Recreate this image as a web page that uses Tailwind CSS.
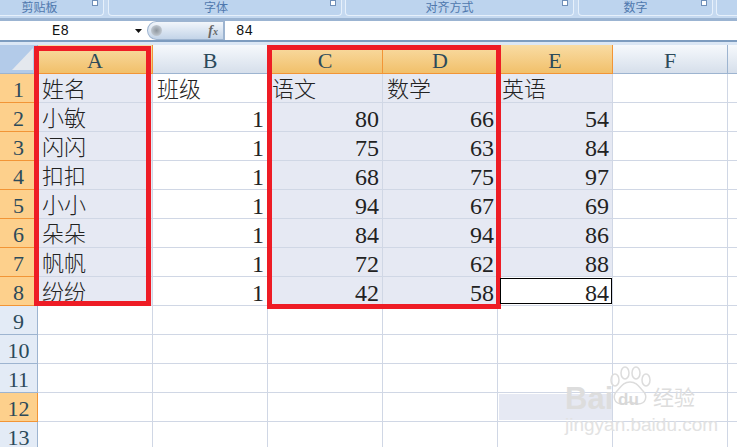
<!DOCTYPE html>
<html lang="zh">
<head>
<meta charset="UTF-8" />
<title>Excel</title>
<script src="https://cdn.jsdelivr.net/npm/@tailwindcss/browser@4"></script>
</head>
<body class="w-[737px] h-[447px] overflow-hidden bg-white relative font-['Liberation_Serif','Noto_Sans_CJK_SC',serif]">
  <!-- ribbon group labels -->
  <div class="h-[21px] bg-[#c5d9f0] border-b-[3px] border-[#9bb4d2] flex gap-[3px] font-['Noto_Sans_CJK_SC',sans-serif] text-[12px] leading-[14px] text-[#4f78ad]">
    <div class="w-[104px] h-[16px] bg-[#bdd4ee] rounded-br border-r border-b border-[#e6f0fb] flex justify-center pr-[24px] relative">剪贴板<span class="absolute right-[5px] top-0 w-[6px] h-[6px] border border-[#6f8fb8] bg-white"></span></div>
    <div class="w-[234px] h-[16px] ml-[1px] bg-[#bdd4ee] rounded-b border border-t-0 border-[#e6f0fb] flex justify-center pr-[18px] relative">字体<span class="absolute right-[5px] top-0 w-[6px] h-[6px] border border-[#6f8fb8] bg-white"></span></div>
    <div class="w-[229px] h-[16px] bg-[#bdd4ee] rounded-b border border-t-0 border-[#e6f0fb] flex justify-center pr-[20px] relative">对齐方式<span class="absolute right-[5px] top-0 w-[6px] h-[6px] border border-[#6f8fb8] bg-white"></span></div>
    <div class="w-[135px] h-[16px] ml-[1px] bg-[#bdd4ee] rounded-b border border-t-0 border-[#e6f0fb] flex justify-center pr-[20px] relative">数字<span class="absolute right-[5px] top-0 w-[6px] h-[6px] border border-[#6f8fb8] bg-white"></span></div>
    <div class="flex-1 h-[16px] bg-[#bdd4ee] rounded-bl border-l border-b border-[#e6f0fb]"></div>
  </div>
  <!-- formula bar -->
  <div class="h-[19px] flex items-center text-[14px] font-['Liberation_Mono',monospace] text-[#111] bg-white">
    <div class="w-[134px] pl-[52px] pt-[2px]">E8</div>
    <svg width="14" height="8" viewBox="0 0 14 8"><path d="M1 2h7L4.5 6z" fill="#111"/></svg>
    <div class="w-[78px] h-[19px] -ml-px rounded-l-full border-r-2 border-l border-y border-[#9db4d0] bg-gradient-to-b from-[#f2f6fb] to-[#c3d4e8] relative">
      <span class="absolute left-[3px] top-[3px] w-[11px] h-[11px] rounded-full bg-radial from-[#8e969e] to-[#d5dde6]"></span>
      <span class="absolute right-[5px] top-[1px] font-['Liberation_Serif',serif] italic text-[14px] leading-[16px] font-bold text-[#666]">f<span class="text-[10px]">x</span></span>
    </div>
    <div class="pl-[11px] pt-[2px]">84</div>
  </div>
  <div class="h-[5px] bg-[#dbe7f5] border-t-2 border-[#7d9cbf]"></div>
  <!-- sheet -->
  <div class="grid grid-cols-[38px_115px_115px_115px_115px_115px_115px_10px] grid-rows-[29px_repeat(13,29px)] text-[#222] text-[22px] leading-none font-light">
    <div class="bg-[#b3cbe9] border-r border-b border-[#9db4d0] relative overflow-hidden"><svg class="absolute right-[3px] bottom-[2px]" width="23" height="24"><path d="M22 1v22H1z" fill="#e4e8ee"/></svg></div>
    <div class="flex items-center justify-center pt-1 bg-gradient-to-b from-[#f9dca3] to-[#f1c06a] border-r border-b border-[#f29536] text-[#2c4a5a] text-[22px]">A</div>
    <div class="flex items-center justify-center pt-1 bg-gradient-to-b from-[#f6f9fc] to-[#d6dfeb] border-r border-b border-[#9db4d0] text-[#2c4a5a] text-[22px]">B</div>
    <div class="flex items-center justify-center pt-1 bg-gradient-to-b from-[#f9dca3] to-[#f1c06a] border-r border-b border-[#f29536] text-[#2c4a5a] text-[22px]">C</div>
    <div class="flex items-center justify-center pt-1 bg-gradient-to-b from-[#f9dca3] to-[#f1c06a] border-r border-b border-[#f29536] text-[#2c4a5a] text-[22px]">D</div>
    <div class="flex items-center justify-center pt-1 bg-gradient-to-b from-[#f9dca3] to-[#f1c06a] border-r border-b border-[#f29536] text-[#2c4a5a] text-[22px]">E</div>
    <div class="flex items-center justify-center pt-1 bg-gradient-to-b from-[#f6f9fc] to-[#d6dfeb] border-r border-b border-[#9db4d0] text-[#2c4a5a] text-[22px]">F</div>
    <div class="bg-gradient-to-b from-[#f6f9fc] to-[#d6dfeb] border-b border-[#9db4d0]"></div>
    <div id="rows" class="contents"></div>
  </div>
  <!-- red annotation boxes sit over the sheet -->
  <div class="absolute left-[34px] top-[46px] w-[117px] h-[260px] border-[5px] border-[#ee1c25]"></div>
  <div class="absolute left-[267px] top-[45px] w-[234px] h-[264px] border-[5px] border-[#ee1c25]"></div>
  <!-- selected cell -->
  <div class="absolute left-[500px] top-[278px] w-[112px] h-[26px] border border-black"></div>
  <div class="absolute left-[499px] top-[394px] w-[113px] h-[26px] bg-[#e6e9f3]"></div>
  <!-- watermark -->
  <svg class="absolute left-[608px] top-[366px]" width="44" height="42" viewBox="0 0 44 42" fill="#fff" fill-opacity="0.5" stroke="#dcdcdc" stroke-width="1.5">
    <ellipse cx="7" cy="14" rx="4" ry="6"/><ellipse cx="17" cy="7" rx="4" ry="6"/><ellipse cx="28" cy="7" rx="4" ry="6"/><ellipse cx="38" cy="14" rx="4" ry="6"/>
    <path d="M22 16c7 0 9 5 13 9 5 5 3 13-5 13-4 0-5-2-8-2s-4 2-8 2c-8 0-10-8-5-13 4-4 6-9 13-9z"/>
  </svg>
  <div class="absolute left-[565px] top-[383px] text-[#dddddd] font-['Liberation_Sans',sans-serif] font-bold text-[31px] leading-none">Bai</div>
  <div class="absolute left-[618px] top-[391px] text-[#d8d8d8] font-['Liberation_Sans',sans-serif] font-bold text-[17px] leading-none">du</div>
  <div class="absolute left-[653px] top-[386px] text-[#dddddd] font-['Noto_Sans_CJK_SC',sans-serif] text-[21px] leading-none">经验</div>
  <div class="absolute left-[565px] top-[415px] text-[#e2e2e2] font-['Liberation_Sans',sans-serif] text-[19px] leading-none">jingyan.baidu.com</div>
  <script>
    const data = [
      ['姓名','班级','语文','数学','英语'],
      ['小敏','1','80','66','54'],['闪闪','1','75','63','84'],['扣扣','1','68','75','97'],
      ['小小','1','94','67','69'],['朵朵','1','84','94','86'],['帆帆','1','72','62','88'],['纷纷','1','42','58','84'],
    ];
    let html = '';
    for (let r = 1; r <= 13; r++) {
      const row = data[r - 1];
      const hot = r <= 8 || r === 12;
      html += `<div class="flex items-center justify-center pt-1 border-r border-b ${hot ? 'bg-[#fdd08c] border-[#f29536]' : 'bg-[#e3ebf6] border-[#9db4d0]'} text-[#2c4a5a]">${r}</div>`;
      for (let c = 0; c < 7; c++) {
        const v = row && c < 5 ? row[c] : '';
        const active = r === 8 && c === 4;
        const fill = row && c !== 1 && c < 5 && !active ? 'bg-[#e6e9f3]' : 'bg-white';
        const num = /^[0-9]+$/.test(v);
        const align = num ? 'justify-end pr-[3px] text-[24px]' : 'pl-[4px]';
        html += `<div class="flex items-center pt-1 ${align} ${fill} ${c < 6 ? 'border-r' : ''} border-b border-[#d0d7e5]">${v}</div>`;
      }
    }
    document.getElementById('rows').outerHTML = html;
  </script>
</body>
</html>
